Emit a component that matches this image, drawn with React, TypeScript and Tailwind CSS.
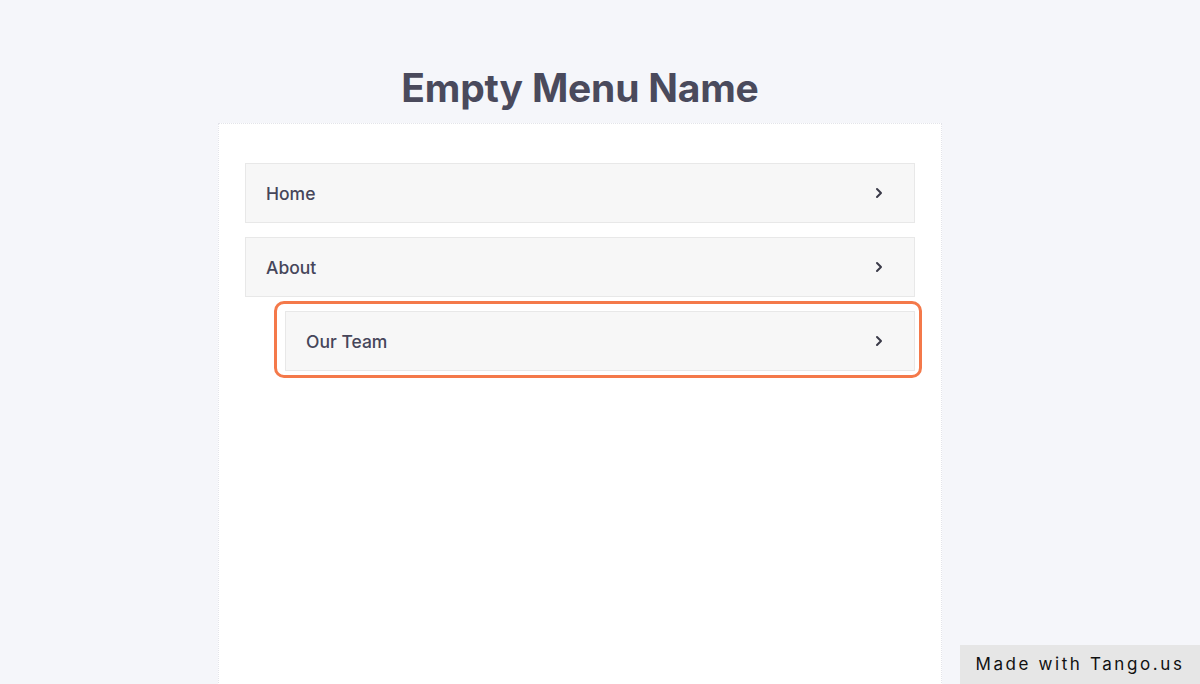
import { ChevronRight } from "lucide-react";

const items = [
  { label: "Home", sub: false },
  { label: "About", sub: false },
  { label: "Our Team", sub: true },
];

function MenuRow({ label }: { label: string }) {
  return (
    <div className="flex h-[60px] items-center justify-between border border-[#e8e8e8] bg-[#f7f7f7] pl-5 pr-[27px]">
      <span className="pt-[2px] text-[17.5px] font-medium text-[#46465a]">{label}</span>
      <ChevronRight size={16} strokeWidth={3} className="text-[#3a3a48]" />
    </div>
  );
}

export default function App() {
  return (
    <div
      className="relative flex h-[684px] w-[1200px] flex-col overflow-hidden bg-[#f5f6fa]"
      style={{ fontFamily: "Inter, 'Open Sans', sans-serif" }}
    >
      <div className="ml-[218px] flex w-[724px] flex-col">
        <h1 className="pt-[63px] pb-[11px] text-center text-[39px] font-bold leading-[49px] tracking-[-0.2px] text-[#4a4a5c]">
          Empty Menu Name
        </h1>
        <div className="flex h-[600px] flex-col gap-[14px] border border-dotted border-[#e3e4ea] bg-white px-[26px] pt-[39px]">
          {items.map((it) =>
            it.sub ? (
              <div
                key={it.label}
                className="-mt-[10px] ml-[29px] -mr-[7px] rounded-[10px] border-[3px] border-[#f4794a] pt-[7px] pb-[4px] pl-[8px] pr-[4px]"
              >
                <MenuRow label={it.label} />
              </div>
            ) : (
              <MenuRow key={it.label} label={it.label} />
            )
          )}
        </div>
      </div>
      <div className="absolute bottom-0 right-0 flex h-[39px] w-[240px] items-center justify-center bg-[#e6e6e6] text-[17px] tracking-[2.6px] text-[#111]">
        Made with Tango.us
      </div>
    </div>
  );
}
